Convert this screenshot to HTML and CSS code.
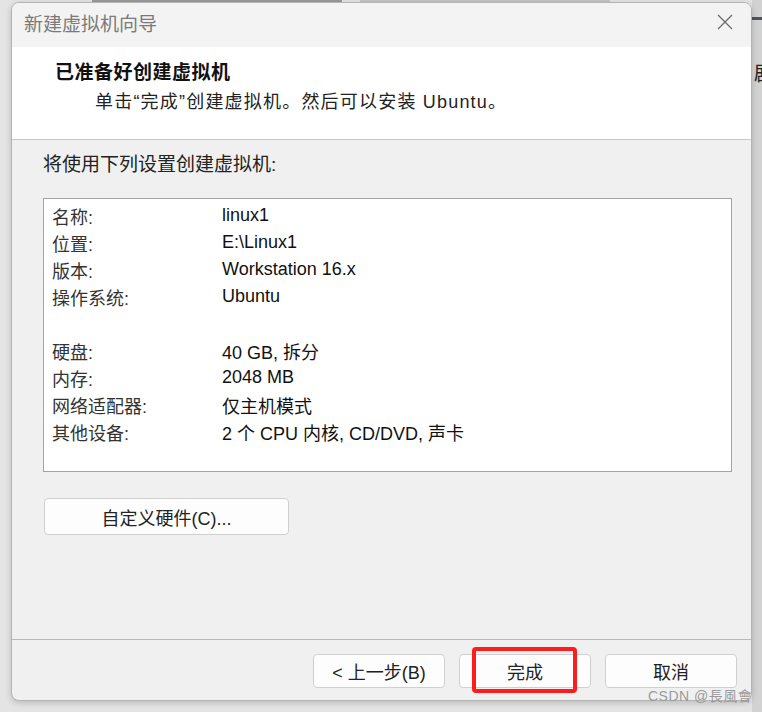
FILE: index.html
```html
<!DOCTYPE html>
<html lang="zh-CN">
<head>
    <meta charset="UTF-8">
    <meta name="viewport" content="width=device-width, initial-scale=1.0">
    <title>新建虚拟机向导</title>
    <link rel="stylesheet" href="styles.css">
</head>
<body>
    <div class="desk">
        <div class="side-text">剧</div>
        <div class="dialog">
            <div class="titlebar">
                <span class="title">新建虚拟机向导</span>
                <svg class="close" width="16" height="16" viewBox="0 0 16 16">
                    <path d="M1 1 L15 15 M15 1 L1 15" stroke="#6b6b6b" stroke-width="1.3" fill="none"/>
                </svg>
            </div>
            <div class="header">
                <div class="header-title">已准备好创建虚拟机</div>
                <div class="header-sub">单击“完成”创建虚拟机。然后可以安装 Ubuntu。</div>
            </div>
            <div class="content">
                <div class="intro">将使用下列设置创建虚拟机:</div>
                <div class="summary">
                    <div class="row"><span class="label">名称:</span><span class="value">linux1</span></div>
                    <div class="row"><span class="label">位置:</span><span class="value">E:\Linux1</span></div>
                    <div class="row"><span class="label">版本:</span><span class="value">Workstation 16.x</span></div>
                    <div class="row"><span class="label">操作系统:</span><span class="value">Ubuntu</span></div>
                    <div class="row"></div>
                    <div class="row"><span class="label">硬盘:</span><span class="value">40 GB, 拆分</span></div>
                    <div class="row"><span class="label">内存:</span><span class="value">2048 MB</span></div>
                    <div class="row"><span class="label">网络适配器:</span><span class="value">仅主机模式</span></div>
                    <div class="row"><span class="label">其他设备:</span><span class="value">2 个 CPU 内核, CD/DVD, 声卡</span></div>
                </div>
                <button class="btn custom">自定义硬件(C)...</button>
            </div>
            <div class="footer">
                <button class="btn">&lt; 上一步(B)</button>
                <button class="btn finish">完成<span class="highlight"></span></button>
                <button class="btn">取消</button>
            </div>
        </div>
        <div class="watermark">CSDN @長風會</div>
    </div>
</body>
</html>
```

FILE: styles.css
```css
body {
    margin: 0;
    width: 762px;
    height: 712px;
    overflow: hidden;
    background: #e4e4e4;
    font-family: "Liberation Sans", "Noto Sans CJK SC", sans-serif;
}

.desk {
    position: relative;
    width: 762px;
    height: 712px;
    background:
        linear-gradient(#9a9a9a, #9a9a9a) 92px 0 / 250px 3px no-repeat,
        linear-gradient(#c4c4c4, #c4c4c4) 360px 0 / 250px 3px no-repeat,
        linear-gradient(#4a5560, #4a5560) 752px 17px / 10px 3px no-repeat,
        linear-gradient(#d2d2d2, #d2d2d2) 752px 0 / 10px 712px no-repeat,
        #e4e4e4;
    padding: 2px 0 0 11px;
    box-sizing: border-box;
    overflow: hidden;
}

.side-text {
    position: absolute;
    left: 754px;
    top: 58px;
    font-size: 20px;
    color: #222;
}

.dialog {
    width: 741px;
    height: 699px;
    box-sizing: border-box;
    border: 1px solid #b4b4b4;
    border-radius: 8px;
    background: #f0f0f0;
    display: flex;
    flex-direction: column;
    overflow: hidden;
    box-shadow: 0 2px 6px rgba(0, 0, 0, 0.18);
}

.titlebar {
    height: 44px;
    flex: none;
    background: #f3f3f3;
    display: flex;
    align-items: center;
    justify-content: space-between;
    padding: 0 18px 6px 12px;
    box-sizing: border-box;
}

.title {
    font-size: 19px;
    color: #7a7a7a;
}

.header {
    height: 93px;
    flex: none;
    background: #fff;
    border-bottom: 1px solid #c8c8c8;
    box-sizing: border-box;
    padding: 13px 0 0 43px;
}

.header-title {
    font-size: 19px;
    font-weight: bold;
    color: #111;
    line-height: 26px;
    letter-spacing: 0.5px;
}

.header-sub {
    font-size: 18px;
    color: #222;
    line-height: 32px;
    padding-left: 40px;
    letter-spacing: 1.2px;
}

.content {
    flex: 1;
    border-bottom: 1px solid #b8b8b8;
    padding: 13px 0 0 31px;
}

.intro {
    font-size: 19px;
    color: #222;
    line-height: 24px;
}

.summary {
    margin-top: 21px;
    width: 689px;
    height: 274px;
    box-sizing: border-box;
    background: #fff;
    border: 1px solid #a3a3a3;
    padding: 3px 0 0 8px;
}

.row {
    height: 27px;
    display: flex;
    align-items: center;
    font-size: 18px;
    color: #111;
}

.label {
    width: 170px;
    color: #333;
}

.btn {
    height: 34px;
    width: 132px;
    background: #fdfdfd;
    border: 1px solid #d0d0d0;
    border-radius: 4px;
    font-family: "Liberation Sans", "Noto Sans CJK SC", sans-serif;
    font-size: 18px;
    color: #222;
    padding: 0;
}

.custom {
    margin-top: 26px;
    margin-left: 1px;
    width: 245px;
    height: 37px;
}

.footer {
    height: 60px;
    flex: none;
    display: flex;
    justify-content: flex-end;
    gap: 14px;
    padding: 14px 14px 0 0;
    box-sizing: border-box;
}

.finish {
    position: relative;
}

.highlight {
    position: absolute;
    left: 12px;
    top: -8px;
    width: 105px;
    height: 46px;
    box-sizing: border-box;
    border: 4px solid #ff1c1c;
    border-radius: 4px;
}

.watermark {
    position: absolute;
    left: 648px;
    top: 685px;
    font-size: 14px;
    color: #9a9a9a;
    letter-spacing: 0.5px;
}
```
